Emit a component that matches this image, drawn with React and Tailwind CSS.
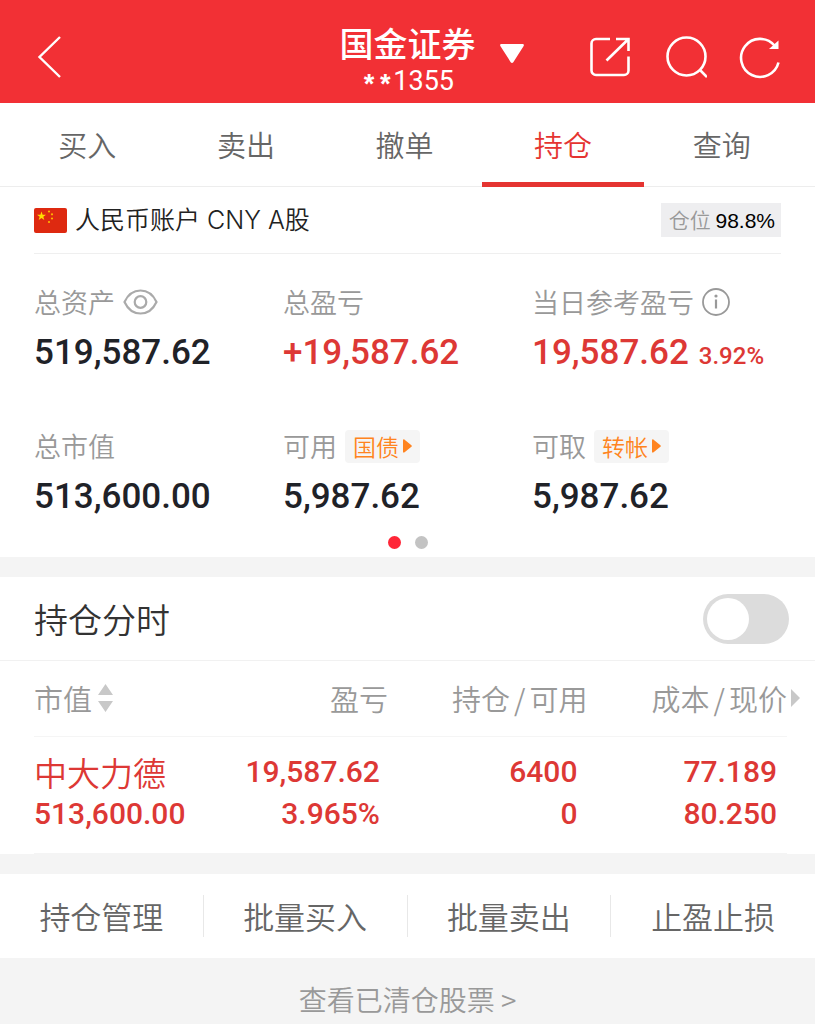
import { useState } from 'react';
import { clsx } from 'clsx';

const TABS = ['买入', '卖出', '撤单', '持仓', '查询'];
const ACTIONS = ['持仓管理', '批量买入', '批量卖出', '止盈止损'];

function Header() {
  return (
    <header className="grid grid-cols-[1fr_auto_1fr] bg-[#f23035] text-white">
      <div className="flex items-center pt-2.5 pl-9">
        <button type="button" aria-label="返回">
          <svg width="28" height="44" viewBox="0 0 28 44" fill="none" stroke="currentColor" strokeWidth="2.4">
            <path d="M24 2 3.5 22 24 42" />
          </svg>
        </button>
      </div>
      <div className="flex flex-col items-center pt-[22px] pb-1.5">
        <h1 className="text-[34px] leading-[42px] font-medium">国金证券</h1>
        <p className="mt-0.5 flex items-end font-['Roboto',sans-serif] text-[27px] leading-[31px]">
          <span className="font-['Liberation_Mono',monospace] leading-5 font-bold">**</span>
          <span>1355</span>
        </p>
      </div>
      <div className="flex items-center justify-between pt-2.5 pr-[33px] pl-6">
        <button type="button" aria-label="切换账户">
          <svg width="24" height="20" viewBox="0 0 24 20" fill="currentColor" className="mb-1.5">
            <path d="M1.500 0h21c1.400 0 1.700 1.200 1 2.200L13.300 18.200c-.7 1-1.900 1-2.600 0L.5 2.200C-.2 1.200.1 0 1.500 0z" />
          </svg>
        </button>
        <div className="flex gap-[31px]">
          <button type="button" aria-label="分享">
            <svg width="44" height="44" viewBox="0 0 44 44" fill="none" stroke="currentColor" strokeWidth="2.6">
              <path d="M22 4H8a4.500 4.500 0 0 0-4.500 4.500v27A4.500 4.500 0 0 0 8 40h28a4.500 4.500 0 0 0 4.500-4.500V21.500" />
              <path d="M28 4h12.500v12M40 4.500 18.500 25.500" />
            </svg>
          </button>
          <button type="button" aria-label="搜索">
            <svg width="44" height="44" viewBox="0 0 44 44" fill="none" stroke="currentColor" strokeWidth="2.6">
              <circle cx="23.500" cy="21.500" r="19" />
              <path d="m37 35 7 7" />
            </svg>
          </button>
          <button type="button" aria-label="刷新">
            <svg width="44" height="44" viewBox="0 0 44 44" fill="none" stroke="currentColor" strokeWidth="2.6">
              <path d="M40.500 27.500A19 19 0 1 1 36.500 10.500" />
              <path d="M40.500 5.500v8.500H31z" fill="currentColor" stroke="none" />
            </svg>
          </button>
        </div>
      </div>
    </header>
  );
}

function Tabs({ active, onChange }) {
  return (
    <nav className="flex border-b border-[#ededed] pr-3.5 pl-2">
      {TABS.map((tab) => (
        <button
          key={tab}
          type="button"
          onClick={() => onChange(tab)}
          className={clsx(
            'relative flex-1 pt-5 pb-5 text-[29px] leading-[43px] font-[350]',
            tab === active ? 'text-[#e53431]' : 'text-[#666]',
          )}
        >
          {tab}
          {tab === active && <span className="absolute -inset-x-0.5 -bottom-px h-[5px] bg-[#e53431]" />}
        </button>
      ))}
    </nav>
  );
}

function Flag() {
  return (
    <svg width="33" height="25" viewBox="0 0 33 25" aria-hidden="true">
      <rect width="33" height="25" rx="2" fill="#de2910" />
      <path fill="#ffde00" d="m7.500 3.500 1.100 3.200H12L9.300 8.700l1 3.200-2.800-2-2.800 2 1-3.200L3 6.700h3.400z" />
      <g fill="#ffb800">
        <circle cx="15" cy="3.500" r="1.100" />
        <circle cx="18" cy="6.300" r="1.100" />
        <circle cx="18" cy="10.500" r="1.100" />
        <circle cx="15" cy="14" r="1.100" />
      </g>
    </svg>
  );
}

function Stat({ label, extra, value, sub, up }) {
  return (
    <div>
      <dt className="flex h-[34px] items-center gap-2 text-[27px] leading-[34px] font-[350] text-[#999]">
        {label}
        {extra}
      </dt>
      <dd
        className={clsx(
          "mt-3.5 font-['Roboto',sans-serif] text-[35px] leading-[40px] font-medium whitespace-nowrap",
          up ? 'text-[#dd3835]' : 'text-[#1f2228]',
        )}
      >
        {value}
        {sub && <span className="ml-2.5 text-2xl leading-[40px]">{sub}</span>}
      </dd>
    </div>
  );
}

function Chip({ children }) {
  return (
    <button
      type="button"
      className="flex h-[33px] items-center gap-1 rounded bg-[#f5f5f5] px-2 text-[23px] leading-[33px] font-[350] text-[#ff8420]"
    >
      {children}
      <svg width="9" height="14" viewBox="0 0 9 14" fill="currentColor">
        <path d="M0 1.500C0 .3.800 0 1.600.7l6.800 5.500c.6.5.6 1.100 0 1.600l-6.800 5.500c-.8.7-1.600.4-1.600-.8z" />
      </svg>
    </button>
  );
}

function Eye() {
  return (
    <button type="button" aria-label="隐藏金额">
      <svg width="35" height="26" viewBox="0 0 35 26" fill="none" stroke="#aaa" strokeWidth="2.2">
        <path d="M1.500 13C5 5.500 10.500 1.500 17.500 1.500S30 5.500 33.500 13C30 20.500 24.500 24.500 17.500 24.500S5 20.500 1.500 13z" />
        <circle cx="17.500" cy="13" r="5.800" />
      </svg>
    </button>
  );
}

function Info() {
  return (
    <button type="button" aria-label="说明">
      <svg width="28" height="28" viewBox="0 0 28 28" fill="none" stroke="#999" strokeWidth="1.8">
        <circle cx="14" cy="14" r="13" />
        <path d="M14 11.500v9" strokeWidth="2.200" />
        <circle cx="14" cy="8" r="1.600" fill="#999" stroke="none" />
      </svg>
    </button>
  );
}

function Account() {
  return (
    <section className="bg-white">
      <div className="px-[34px]">
        <div className="flex items-center justify-between border-b border-[#efefef] pt-4 pb-4">
          <div className="flex items-center gap-2">
            <Flag />
            <h2 className="font-['Inter','Noto_Sans_CJK_SC',sans-serif] text-[25px] leading-[33px] font-[350] text-[#222]">
              人民币账户 CNY A股
            </h2>
          </div>
          <p className="bg-[#eeeef0] pr-1.5 pl-2 text-[21px] leading-[33px] font-[350] text-[#999]">
            仓位 <span className="font-['Liberation_Sans',sans-serif] font-normal text-black">98.8%</span>
          </p>
        </div>
        <dl className="grid grid-cols-3 gap-y-[53px] pt-[31px]">
          <Stat label="总资产" extra={<Eye />} value="519,587.62" />
          <Stat label="总盈亏" value="+19,587.62" up />
          <Stat label="当日参考盈亏" extra={<Info />} value="19,587.62" sub="3.92%" up />
          <Stat label="总市值" value="513,600.00" />
          <Stat label="可用" extra={<Chip>国债</Chip>} value="5,987.62" />
          <Stat label="可取" extra={<Chip>转帐</Chip>} value="5,987.62" />
        </dl>
      </div>
      <div className="flex justify-center gap-3.5 pt-[19px] pb-2">
        <span className="size-[13px] rounded-full bg-[#ff2637]" />
        <span className="size-[13px] rounded-full bg-[#c3c3c3]" />
      </div>
    </section>
  );
}

function Holdings() {
  return (
    <section className="mt-5 bg-white">
      <div className="flex h-[84px] items-center justify-between border-b border-[#f1f1f1] pr-[26px] pl-[34px]">
        <label htmlFor="intraday" className="text-[34px] leading-[50px] font-[350] text-[#333]">
          持仓分时
        </label>
        <input
          id="intraday"
          type="checkbox"
          role="switch"
          className="flex h-[50px] w-[86px] appearance-none items-center rounded-full bg-[#dcdcdc] p-1 before:size-[42px] before:rounded-full before:bg-white checked:justify-end checked:bg-[#f23035]"
        />
      </div>
      <div className="pr-7 pl-[34px]">
        <table className="w-full table-fixed text-right">
          <thead>
            <tr className="h-[75px] border-b border-[#f5f5f5] text-[29px] leading-[42px] text-[#999]">
              <th className="w-[25%] text-left font-[350]">
                <button type="button" className="flex items-center gap-1.5">
                  市值
                  <svg width="15" height="28" viewBox="0 0 15 28" fill="#c8c8c8">
                    <path d="M7.500 0 15 11H0zM7.500 28 0 17h15z" />
                  </svg>
                </button>
              </th>
              <th className="w-[22%] font-[350]">盈亏</th>
              <th className="font-[350]">
                持仓<span className="mx-1">/</span>可用
              </th>
              <th className="relative font-[350]">
                成本<span className="mx-1">/</span>现价
                <svg width="9" height="18" viewBox="0 0 9 18" fill="#c8c8c8" className="absolute top-7 left-full ml-1">
                  <path d="M0 0 9 9 0 18z" />
                </svg>
              </th>
            </tr>
          </thead>
          <tbody>
            <tr className="border-b border-[#f4f4f4] font-['Roboto',sans-serif] text-[30px] leading-[42px] font-medium text-[#dd3835]">
              <td className="pt-3.5 pb-[18px] text-left">
                <a href="#stock" className="block font-['Noto_Sans_CJK_SC',sans-serif] text-[33px] font-[350]">
                  中大力德
                </a>
                513,600.00
              </td>
              <td className="pt-3.5 pr-2 pb-[18px]">
                19,587.62
                <br />
                3.965%
              </td>
              <td className="pt-3.5 pr-2.5 pb-[18px]">
                6400
                <br />0
              </td>
              <td className="pt-3.5 pr-2.5 pb-[18px]">
                77.189
                <br />
                80.250
              </td>
            </tr>
          </tbody>
        </table>
      </div>
    </section>
  );
}

export default function App() {
  const [tab, setTab] = useState('持仓');

  return (
    <div className="min-h-screen bg-[#f4f4f4] font-['Noto_Sans_CJK_SC',sans-serif]">
      <Header />
      <div className="bg-white">
        <Tabs active={tab} onChange={setTab} />
      </div>
      <Account />
      <Holdings />
      <div className="mt-5 grid grid-cols-4 divide-x divide-[#e8e8e8] bg-white py-[21px]">
        {ACTIONS.map((name) => (
          <button key={name} type="button" className="text-[31px] leading-[42px] font-[350] text-[#666]">
            {name}
          </button>
        ))}
      </div>
      <footer className="pt-[21px] text-center">
        <a href="#closed" className="text-[28px] leading-[40px] font-[350] text-[#999]">
          查看已清仓股票 &gt;
        </a>
      </footer>
    </div>
  );
}
